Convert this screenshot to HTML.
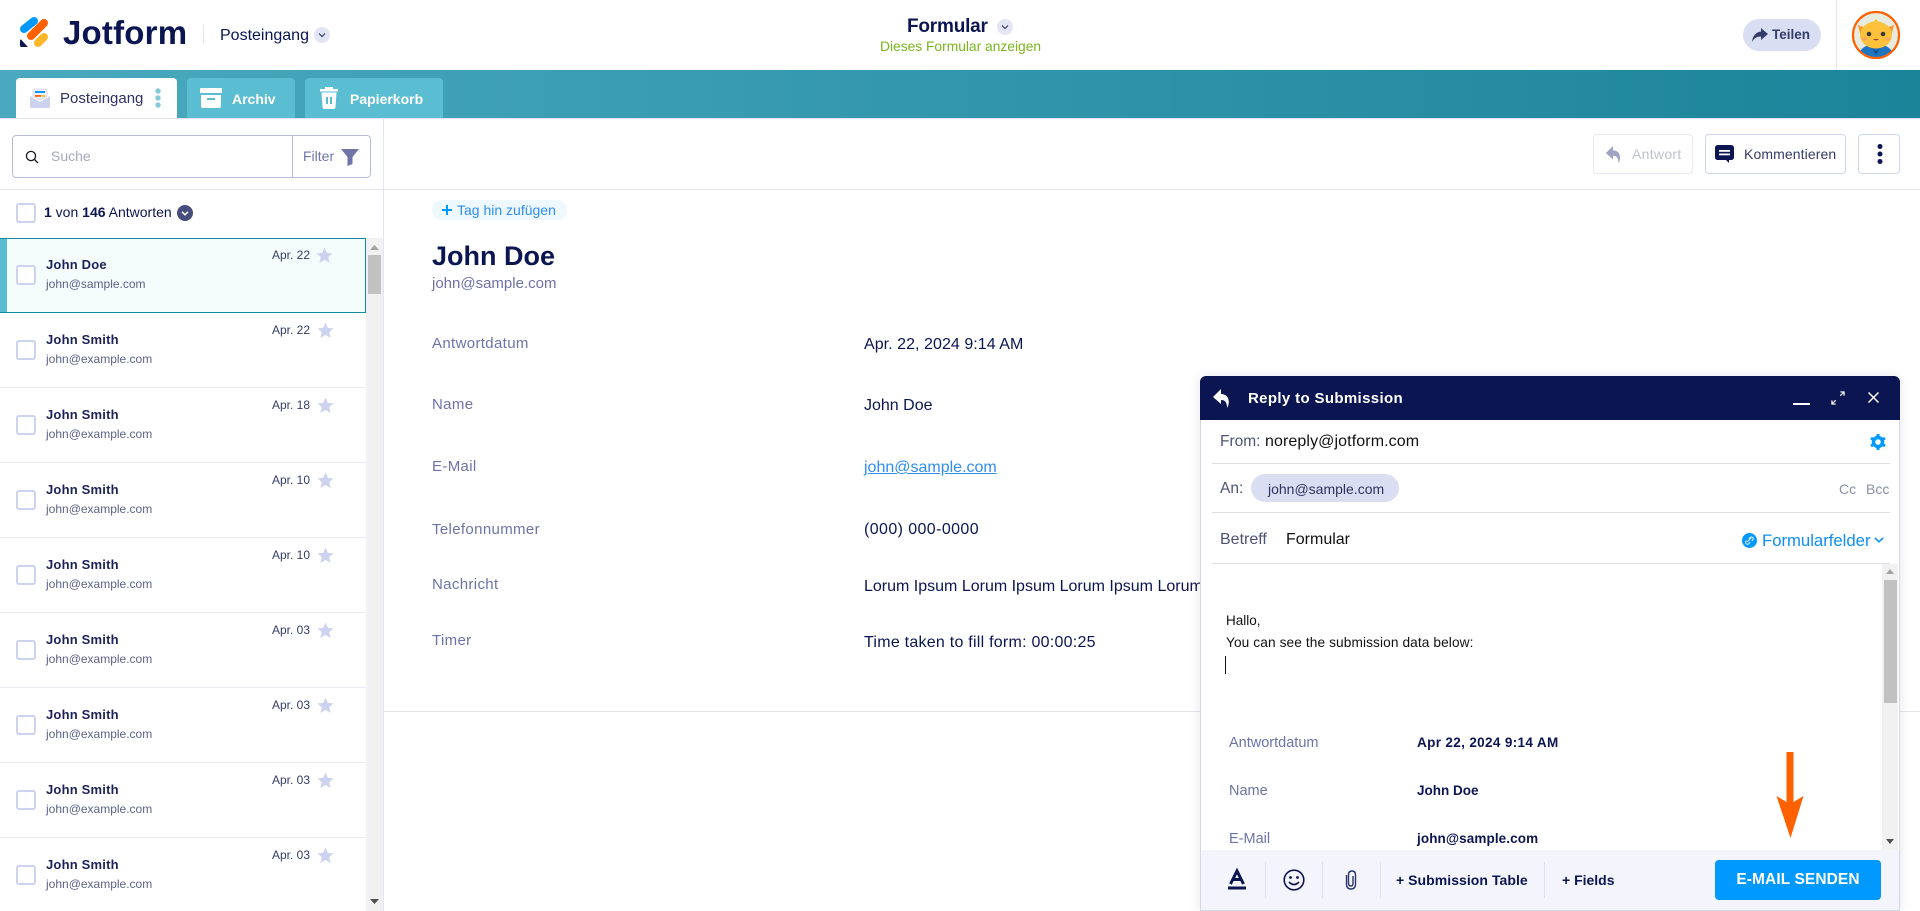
<!DOCTYPE html>
<html lang="de"><head><meta charset="utf-8"><title>Jotform Posteingang</title>
<style>
*{box-sizing:border-box}
html,body{margin:0;padding:0;width:1920px;height:911px;overflow:hidden;background:#fff;font-family:"Liberation Sans",sans-serif;color:#0a1551}
.a{position:absolute;white-space:nowrap}
svg{display:block;position:absolute;overflow:visible}
.tab{position:absolute;top:78px;height:40px;background:#5bbdd1;border-radius:4px 4px 0 0;color:#fff;font-size:14px;font-weight:bold;line-height:42px}
.row{position:absolute;left:0;width:366px;height:75px;border-bottom:1px solid #e8e9f3}
.cb{position:absolute;left:16px;top:27px;width:20px;height:20px;border:2px solid #cdd2ef;border-radius:3px;background:#fff}
.nm{position:absolute;left:46px;top:19px;font-size:13px;font-weight:bold;line-height:16px;color:#1c2259;letter-spacing:.2px;white-space:nowrap}
.em{position:absolute;left:46px;top:38px;font-size:12px;line-height:16px;color:#5d6288;white-space:nowrap}
.dt{position:absolute;right:56px;top:9px;font-size:12px;line-height:16px;color:#343c6a;white-space:nowrap}
.st{position:absolute;left:317px;top:9px}
.lb{position:absolute;left:432px;font-size:15px;line-height:20px;color:#6c73a8;white-space:nowrap;letter-spacing:.35px}
.vl{position:absolute;left:864px;font-size:16px;line-height:20px;color:#0a1551;white-space:nowrap}
.btn{position:absolute;top:134px;height:40px;background:#fff;border:1px solid #d0d5f0;border-radius:4px}
.mdiv{position:absolute;left:1212px;width:678px;height:1px;background:#dcdde3}
.fd{position:absolute;top:862px;width:1px;height:36px;background:#dfe1ee}
.ml{position:absolute;left:1229px;font-size:14.500px;line-height:16px;color:#6c73a8;white-space:nowrap}
.mv{position:absolute;left:1417px;font-size:13.500px;line-height:16px;font-weight:bold;color:#0a1551;white-space:nowrap}
</style></head><body>

<!-- Header -->
<div class="a" style="left:0;top:0;width:1920px;height:70px;background:#fff"></div>
<svg style="left:0;top:0" width="70" height="60" viewBox="0 0 70 60">
<line x1="24" y1="29" x2="34" y2="21" stroke="#0099ff" stroke-width="8" stroke-linecap="round"/>
<line x1="31" y1="36" x2="44" y2="23" stroke="#ff6100" stroke-width="8" stroke-linecap="round"/>
<line x1="38" y1="43" x2="44" y2="37" stroke="#ffb629" stroke-width="8" stroke-linecap="round"/>
<path d="M20 40.500Q20 39 21.200 39.800L27.500 46.500Q28 47 27 47L21.500 47Q20 47 20 45.500Z" fill="#0a1551"/>
</svg>
<div class="a" style="left:63px;top:14px;font-size:33px;line-height:38px;font-weight:bold;color:#0a1551;letter-spacing:.2px">Jotform</div>
<div class="a" style="left:203px;top:25px;width:1px;height:20px;background:#e3e5f2"></div>
<div class="a" style="left:220px;top:26px;font-size:16px;line-height:20px;color:#0a1551">Posteingang</div>
<div class="a" style="left:314px;top:27px;width:16px;height:16px;border-radius:50%;background:#e3e5f5"></div>
<svg style="left:314px;top:27px" width="16" height="16"><path d="M5 6.500L8 9.500L11 6.500" fill="none" stroke="#343c6a" stroke-width="1.200"/></svg>

<div class="a" style="left:907px;top:15px;font-size:19px;line-height:24px;font-weight:bold;color:#0a1551;letter-spacing:-.2px">Formular</div>
<div class="a" style="left:997px;top:19px;width:16px;height:16px;border-radius:50%;background:#e3e5f5"></div>
<svg style="left:997px;top:19px" width="16" height="16"><path d="M5 6.500L8 9.500L11 6.500" fill="none" stroke="#343c6a" stroke-width="1.200"/></svg>
<div class="a" style="left:880px;top:38px;font-size:13.800px;line-height:17px;color:#7ab51d">Dieses Formular anzeigen</div>

<div class="a" style="left:1743px;top:19px;width:78px;height:32px;border-radius:16px;background:#dadef3"></div>
<svg style="left:1751px;top:27px" width="18" height="16" viewBox="0 0 18 16"><path d="M10 1L17 7L10 13V9.500C6 9.500 3 11 1 15C1.500 9 5 5 10 4.500Z" fill="#343c6a"/></svg>
<div class="a" style="left:1772px;top:26px;font-size:13.500px;line-height:18px;font-weight:bold;color:#343c6a">Teilen</div>
<div class="a" style="left:1836px;top:0;width:1px;height:70px;background:#e3e5f2"></div>
<svg style="left:1852px;top:11px" width="48" height="48" viewBox="0 0 48 48">
<defs><clipPath id="c"><circle cx="24" cy="24" r="22"/></clipPath></defs>
<circle cx="24" cy="24" r="23" fill="#e8ebe0" stroke="#ff6100" stroke-width="2.200"/>
<g clip-path="url(#c)">
<path d="M6 48C6 38 14 33 24 33C34 33 42 38 42 48Z" fill="#1f75c0"/>
<path d="M6 14L14 17L9 26Z" fill="#f59b2c"/><path d="M42 14L34 17L39 26Z" fill="#f59b2c"/>
<ellipse cx="24" cy="24" rx="16" ry="13.500" fill="#fdc13c"/>
<path d="M21 11L24 8L27 11Z" fill="#fdc13c"/>
<circle cx="17" cy="23" r="2.300" fill="#3a3a3a"/><circle cx="31" cy="23" r="2.300" fill="#3a3a3a"/>
<ellipse cx="12.500" cy="28" rx="3" ry="1.500" fill="#fba95f"/><ellipse cx="35.500" cy="28" rx="3" ry="1.500" fill="#fba95f"/>
<path d="M21 28Q24 31 27 28" fill="#a3402b"/>
<path d="M20 37L24 40L28 37L24 44Z" fill="#0d4f8d"/>
</g></svg>

<!-- Teal bar -->
<div class="a" style="left:0;top:70px;width:1920px;height:48px;background:linear-gradient(90deg,#4aa9be,#1b8499)"></div>
<div class="a" style="left:0;top:118px;width:1920px;height:1px;background:#e3e5f2"></div>

<div class="tab" style="left:16px;width:161px;background:#fff;color:#2b3164;font-weight:normal;font-size:15px;padding-left:44px;z-index:2">Posteingang</div>
<svg style="left:30px;top:88px;z-index:3" width="20" height="20" viewBox="0 0 20 20">
<path d="M3 2.500Q3 1 4.500 1H15.500Q17 1 17 2.500V8L10 12L3 8Z" fill="#f0f1fa" stroke="#cfd3ee" stroke-width=".8"/>
<rect x="5" y="3" width="10" height="2" fill="#0099ff"/><rect x="5" y="7" width="6" height="1.800" fill="#ff6100"/><rect x="12" y="7" width="3" height="1.800" fill="#ffb629"/>
<path d="M0 8L10 14L20 8V18Q20 20 18 20H2Q0 20 0 18Z" fill="#cdd2ef"/>
</svg>
<svg style="left:153px;top:88px;z-index:3" width="10" height="20"><circle cx="5" cy="3" r="2.700" fill="#84cad9"/><circle cx="5" cy="10" r="2.700" fill="#84cad9"/><circle cx="5" cy="17" r="2.700" fill="#84cad9"/></svg>

<div class="tab" style="left:187px;width:108px;padding-left:45px">Archiv</div>
<svg style="left:200px;top:88px" width="22" height="20" viewBox="0 0 22 20"><rect x="0" y="0" width="22" height="5" rx=".8" fill="#fff"/><path d="M1 7H21V18Q21 20 19 20H3Q1 20 1 18Z" fill="#fff"/><rect x="7" y="10" width="8" height="2" fill="#5bbdd1"/></svg>
<div class="tab" style="left:305px;width:138px;padding-left:45px">Papierkorb</div>
<svg style="left:320px;top:87px" width="18" height="22" viewBox="0 0 18 22"><rect x="0" y="2" width="18" height="2.500" fill="#fff"/><rect x="5" y="0" width="8" height="2" fill="#fff"/><path d="M1.500 5.500H16.500L15.500 20Q15.400 22 13.500 22H4.500Q2.600 22 2.500 20Z" fill="#fff"/><rect x="6" y="10" width="2" height="7" fill="#5bbdd1"/><rect x="10" y="10" width="2" height="7" fill="#5bbdd1"/></svg>

<!-- Left panel -->
<div class="a" style="left:383px;top:119px;width:1px;height:792px;background:#e3e5f2"></div>
<div class="a" style="left:0;top:189px;width:1920px;height:1px;background:#e3e5ea"></div>
<div class="a" style="left:12px;top:135px;width:359px;height:43px;border:1px solid #b8bcd9;border-radius:4px;background:#fff"></div>
<div class="a" style="left:292px;top:135px;width:1px;height:43px;background:#b8bcd9"></div>
<svg style="left:25px;top:150px" width="14" height="14" viewBox="0 0 14 14"><circle cx="6" cy="6" r="4.600" fill="none" stroke="#1a1a2a" stroke-width="1.300"/><line x1="9.500" y1="9.500" x2="13" y2="13" stroke="#1a1a2a" stroke-width="1.300"/></svg>
<div class="a" style="left:51px;top:147px;font-size:14px;line-height:18px;color:#a5a8bd">Suche</div>
<div class="a" style="left:303px;top:147px;font-size:14px;line-height:18px;color:#6f76a7">Filter</div>
<svg style="left:341px;top:148px" width="18" height="18" viewBox="0 0 18 18"><path d="M0 1H18L11.500 9V16L6.500 18V9Z" fill="#6f76a7" stroke-linejoin="round"/></svg>

<div class="cb" style="top:203px;left:16px"></div>
<div class="a" style="left:44px;top:203px;font-size:14px;line-height:18px;color:#0a1551"><b>1</b> von <b>146</b> Antworten</div>
<div class="a" style="left:177px;top:205px;width:16px;height:16px;border-radius:50%;background:#474e7d"></div>
<svg style="left:177px;top:205px" width="16" height="16"><path d="M5 6.800L8 9.800L11 6.800" fill="none" stroke="#fff" stroke-width="1.500"/></svg>

<!-- Scrollbar -->
<div class="a" style="left:366px;top:238px;width:17px;height:673px;background:#f1f1f1"></div>
<div class="a" style="left:368px;top:255px;width:13px;height:39px;background:#c1c1c1"></div>
<svg style="left:370px;top:245px" width="9" height="5"><path d="M0 5L4.500 0L9 5Z" fill="#a3a3a3"/></svg>
<svg style="left:370px;top:899px" width="9" height="5"><path d="M0 0L4.500 5L9 0Z" fill="#505050"/></svg>

<!-- Rows -->
<div class="row" style="top:238px;background:#f5fcfc;border:1px solid #12899d;height:75px"><div style="position:absolute;left:-1px;top:0;width:7px;height:73px;background:#5bbdd1"></div><div class="cb" style="left:15px;top:26px"></div><div class="nm" style="left:45px;top:18px">John Doe</div><div class="em" style="left:45px;top:37px">john@sample.com</div><div class="dt" style="right:55px;top:8px">Apr. 22</div><svg class="st" style="left:315px;top:8px" width="17" height="17" viewBox="0 0 16 16"><path d="M8 .5L10.200 5.500L15.500 6L11.500 9.600L12.800 15L8 12.100L3.200 15L4.500 9.600L.5 6L5.800 5.500Z" fill="#cdd2ef"/></svg></div>

<div class="row" style="top:313px"><div class="cb"></div><div class="nm">John Smith</div><div class="em">john@example.com</div><div class="dt">Apr. 22</div><svg class="st" width="17" height="17" viewBox="0 0 16 16"><path d="M8 .5L10.200 5.500L15.500 6L11.500 9.600L12.800 15L8 12.100L3.200 15L4.500 9.600L.5 6L5.800 5.500Z" fill="#cdd2ef"/></svg></div>
<div class="row" style="top:388px"><div class="cb"></div><div class="nm">John Smith</div><div class="em">john@example.com</div><div class="dt">Apr. 18</div><svg class="st" width="17" height="17" viewBox="0 0 16 16"><path d="M8 .5L10.200 5.500L15.500 6L11.500 9.600L12.800 15L8 12.100L3.200 15L4.500 9.600L.5 6L5.800 5.500Z" fill="#cdd2ef"/></svg></div>
<div class="row" style="top:463px"><div class="cb"></div><div class="nm">John Smith</div><div class="em">john@example.com</div><div class="dt">Apr. 10</div><svg class="st" width="17" height="17" viewBox="0 0 16 16"><path d="M8 .5L10.200 5.500L15.500 6L11.500 9.600L12.800 15L8 12.100L3.200 15L4.500 9.600L.5 6L5.800 5.500Z" fill="#cdd2ef"/></svg></div>
<div class="row" style="top:538px"><div class="cb"></div><div class="nm">John Smith</div><div class="em">john@example.com</div><div class="dt">Apr. 10</div><svg class="st" width="17" height="17" viewBox="0 0 16 16"><path d="M8 .5L10.200 5.500L15.500 6L11.500 9.600L12.800 15L8 12.100L3.200 15L4.500 9.600L.5 6L5.800 5.500Z" fill="#cdd2ef"/></svg></div>
<div class="row" style="top:613px"><div class="cb"></div><div class="nm">John Smith</div><div class="em">john@example.com</div><div class="dt">Apr. 03</div><svg class="st" width="17" height="17" viewBox="0 0 16 16"><path d="M8 .5L10.200 5.500L15.500 6L11.500 9.600L12.800 15L8 12.100L3.200 15L4.500 9.600L.5 6L5.800 5.500Z" fill="#cdd2ef"/></svg></div>
<div class="row" style="top:688px"><div class="cb"></div><div class="nm">John Smith</div><div class="em">john@example.com</div><div class="dt">Apr. 03</div><svg class="st" width="17" height="17" viewBox="0 0 16 16"><path d="M8 .5L10.200 5.500L15.500 6L11.500 9.600L12.800 15L8 12.100L3.200 15L4.500 9.600L.5 6L5.800 5.500Z" fill="#cdd2ef"/></svg></div>
<div class="row" style="top:763px"><div class="cb"></div><div class="nm">John Smith</div><div class="em">john@example.com</div><div class="dt">Apr. 03</div><svg class="st" width="17" height="17" viewBox="0 0 16 16"><path d="M8 .5L10.200 5.500L15.500 6L11.500 9.600L12.800 15L8 12.100L3.200 15L4.500 9.600L.5 6L5.800 5.500Z" fill="#cdd2ef"/></svg></div>
<div class="row" style="top:838px;border-bottom:0;height:73px"><div class="cb"></div><div class="nm">John Smith</div><div class="em">john@example.com</div><div class="dt">Apr. 03</div><svg class="st" width="17" height="17" viewBox="0 0 16 16"><path d="M8 .5L10.200 5.500L15.500 6L11.500 9.600L12.800 15L8 12.100L3.200 15L4.500 9.600L.5 6L5.800 5.500Z" fill="#cdd2ef"/></svg></div>

<!-- Action buttons -->
<div class="btn" style="left:1593px;width:100px;border-color:#e6e8f5"></div>
<svg style="left:1605px;top:145px" width="17" height="18" viewBox="0 0 17 20"><path d="M8 1L0 9L8 16V12C12 12 14 14 14 20C17 16 17 6 8 6Z" fill="#a0a4c2"/></svg>
<div class="a" style="left:1632px;top:145px;font-size:14px;line-height:18px;color:#bfc1d0;letter-spacing:.3px">Antwort</div>
<div class="btn" style="left:1705px;width:141px"></div>
<svg style="left:1715px;top:145px" width="19" height="18" viewBox="0 0 19 18"><path d="M3 0H16Q19 0 19 3V12Q19 15 16 15H14V18L11 15H3Q0 15 0 12V3Q0 0 3 0Z" fill="#0a1551"/><rect x="4" y="5" width="11" height="1.800" fill="#fff"/><rect x="4" y="8.500" width="11" height="1.800" fill="#fff"/></svg>
<div class="a" style="left:1744px;top:145px;font-size:14px;line-height:18px;color:#343c6a;letter-spacing:.1px">Kommentieren</div>
<div class="btn" style="left:1858px;width:42px"></div>
<svg style="left:1875px;top:144px" width="10" height="20"><circle cx="5" cy="2.500" r="2.500" fill="#0a1551"/><circle cx="5" cy="10" r="2.500" fill="#0a1551"/><circle cx="5" cy="17.500" r="2.500" fill="#0a1551"/></svg>

<!-- Main content -->
<div class="a" style="left:432px;top:200px;width:135px;height:20px;border-radius:10px;background:#edf8ff"></div>
<svg style="left:442px;top:205px" width="10" height="10"><path d="M5 0V10M0 5H10" stroke="#0099ff" stroke-width="2"/></svg>
<div class="a" style="left:457px;top:202px;font-size:14px;line-height:16px;color:#2f8ef0">Tag hin zufügen</div>
<div class="a" style="left:432px;top:240px;font-size:27px;line-height:32px;font-weight:bold;color:#0a1551">John Doe</div>
<div class="a" style="left:432px;top:275px;font-size:15px;line-height:18px;color:#6c73a8">john@sample.com</div>

<div class="lb" style="top:334px">Antwortdatum</div><div class="vl" style="top:335px;letter-spacing:.05px">Apr. 22, 2024 9:14 AM</div>
<div class="lb" style="top:395px">Name</div><div class="vl" style="top:396px">John Doe</div>
<div class="lb" style="top:457px">E-Mail</div><div class="vl" style="top:458px;color:#2f8ef0;text-decoration:underline">john@sample.com</div>
<div class="lb" style="top:520px">Telefonnummer</div><div class="vl" style="top:520px;letter-spacing:.4px">(000) 000-0000</div>
<div class="lb" style="top:575px">Nachricht</div><div class="vl" style="top:577px">Lorum Ipsum Lorum Ipsum Lorum Ipsum Lorum Ipsum</div>
<div class="lb" style="top:631px">Timer</div><div class="vl" style="top:633px;letter-spacing:.25px">Time taken to fill form: 00:00:25</div>
<div class="a" style="left:384px;top:711px;width:1536px;height:1px;background:#e3e5ea"></div>

<!-- Modal -->
<div class="a" style="left:1200px;top:376px;width:700px;height:535px;background:#fff;border:1px solid #d4d7e8;border-radius:6px 6px 0 0;box-shadow:0 0 12px rgba(10,21,81,.1)"></div>
<div class="a" style="left:1200px;top:376px;width:700px;height:44px;background:#0a1551;border-radius:6px 6px 0 0"></div>
<svg style="left:1213px;top:388px" width="17" height="20" viewBox="0 0 17 20"><path d="M8 1L0 9L8 16V12C12 12 14 14 14 20C17 16 17 6 8 6Z" fill="#fff"/></svg>
<div class="a" style="left:1248px;top:390px;font-size:15px;line-height:18px;font-weight:bold;color:#fff;letter-spacing:.35px">Reply to Submission</div>
<div class="a" style="left:1793px;top:403px;width:17px;height:2px;background:#fff"></div>
<svg style="left:1831px;top:391px" width="14" height="14" viewBox="0 0 15 15"><path d="M10 1H14V5M14 1L10 5M1 10V14H5M1 14L5 10" fill="none" stroke="#fff" stroke-width="1.300"/></svg>
<svg style="left:1868px;top:392px" width="11" height="11"><path d="M.5.5L10.500 10.500M10.500.5L.5 10.500" stroke="#fff" stroke-width="1.500"/></svg>

<div class="a" style="left:1220px;top:433px;font-size:15.500px;line-height:18px;color:#4d5377">From:</div>
<div class="a" style="left:1265px;top:433px;font-size:16px;line-height:18px;color:#111;letter-spacing:.1px">noreply@jotform.com</div>
<svg style="left:1870px;top:434px" width="16" height="16" viewBox="0 0 16 16"><circle cx="8" cy="8" r="4.500" fill="none" stroke="#0099ff" stroke-width="3.500"/><path d="M8 0V3M8 13V16M1 4L3.500 5.500M12.500 10.500L15 12M1 12L3.500 10.500M12.500 5.500L15 4" stroke="#0099ff" stroke-width="3"/></svg>
<div class="mdiv" style="top:463px"></div>
<div class="a" style="left:1220px;top:480px;font-size:15.500px;line-height:18px;color:#4d5377">An:</div>
<div class="a" style="left:1251px;top:474px;width:148px;height:28px;border-radius:14px;background:#dadef3"></div>
<div class="a" style="left:1268px;top:480px;font-size:14px;line-height:18px;color:#2f3560">john@sample.com</div>
<div class="a" style="left:1839px;top:480px;font-size:14px;line-height:18px;color:#8a8ea9">Cc</div>
<div class="a" style="left:1866px;top:480px;font-size:14px;line-height:18px;color:#8a8ea9">Bcc</div>
<div class="mdiv" style="top:512px"></div>
<div class="a" style="left:1220px;top:531px;font-size:16px;line-height:18px;color:#4d5377">Betreff</div>
<div class="a" style="left:1286px;top:531px;font-size:16px;line-height:18px;color:#111">Formular</div>
<div class="a" style="left:1742px;top:533px;width:15px;height:15px;border-radius:50%;background:#0099ff"></div>
<svg style="left:1742px;top:533px" width="15" height="15"><path d="M5 9L9 5M4.500 7.500L3.800 8.500Q3 10 4.500 11Q6 11.800 7 10.500L8 9M7 5.500L8 4.500Q9.500 3.500 10.800 4.500Q11.800 6 10.500 7L9.800 7.800" fill="none" stroke="#fff" stroke-width=".9"/></svg>
<div class="a" style="left:1762px;top:532px;font-size:16.700px;line-height:18px;color:#0c8ff0">Formularfelder</div>
<svg style="left:1874px;top:537px" width="10" height="6"><path d="M.8.8L5 4.800L9.200.8" fill="none" stroke="#0c8ff0" stroke-width="1.500"/></svg>
<div class="mdiv" style="top:563px"></div>

<div class="a" style="left:1882px;top:564px;width:16px;height:286px;background:#f1f1f1"></div>
<div class="a" style="left:1884px;top:580px;width:13px;height:123px;background:#c1c1c1"></div>
<svg style="left:1886px;top:569px" width="8" height="5"><path d="M0 5L4 0L8 5Z" fill="#a3a3a3"/></svg>
<svg style="left:1886px;top:839px" width="8" height="5"><path d="M0 0L4 5L8 0Z" fill="#505050"/></svg>

<div class="a" style="left:1226px;top:613px;font-size:13.500px;line-height:16px;color:#111">Hallo,</div>
<div class="a" style="left:1226px;top:635px;font-size:13.700px;line-height:16px;color:#111;letter-spacing:.1px">You can see the submission data below:</div>
<div class="a" style="left:1225px;top:656px;width:1px;height:18px;background:#111"></div>

<div class="ml" style="top:735px">Antwortdatum</div><div class="mv" style="top:735px;letter-spacing:.35px">Apr 22, 2024 9:14 AM</div>
<div class="ml" style="top:783px">Name</div><div class="mv" style="top:783px">John Doe</div>
<div class="ml" style="top:831px">E-Mail</div><div class="mv" style="top:831px;letter-spacing:.1px">john@sample.com</div>

<!-- Footer -->
<div class="a" style="left:1201px;top:850px;width:698px;height:60px;background:#f3f4fc"></div>
<svg style="left:1228px;top:869px" width="18" height="21" viewBox="0 0 18 21"><path d="M2.500 15L9 2L15.500 15M5 10.500H13" fill="none" stroke="#0a1551" stroke-width="3"/><rect x="0" y="17.500" width="18" height="3" fill="#0a1551"/></svg>
<div class="fd" style="left:1265px"></div>
<svg style="left:1283px;top:869px" width="22" height="22" viewBox="0 0 22 22"><circle cx="11" cy="11" r="9.800" fill="none" stroke="#0a1551" stroke-width="1.600"/><circle cx="7.500" cy="8.500" r="1.400" fill="#0a1551"/><circle cx="14.500" cy="8.500" r="1.400" fill="#0a1551"/><path d="M6 13Q11 18 16 13" fill="none" stroke="#0a1551" stroke-width="1.600"/></svg>
<div class="fd" style="left:1322px"></div>
<svg style="left:1345px;top:870px" width="12" height="20" viewBox="0 0 12 20"><path d="M1.500 5V14Q1.500 19 6 19Q10.500 19 10.500 14V5Q10.500 1 7 1Q3.500 1 3.500 5V13Q3.500 16 6 16Q8 16 8 13V6" fill="none" stroke="#2b3469" stroke-width="1.400"/></svg>
<div class="fd" style="left:1380px"></div>
<div class="a" style="left:1396px;top:871px;font-size:14px;line-height:18px;font-weight:bold;color:#0a1551;letter-spacing:.05px">+ Submission Table</div>
<div class="fd" style="left:1544px"></div>
<div class="a" style="left:1562px;top:871px;font-size:14px;line-height:18px;font-weight:bold;color:#0a1551">+ Fields</div>
<div class="a" style="left:1715px;top:860px;width:166px;height:40px;border-radius:4px;background:#0099ff;color:#fff;font-size:15.500px;line-height:40px;font-weight:bold;text-align:center;letter-spacing:.1px">E-MAIL SENDEN</div>

<!-- Orange arrow -->
<svg style="left:1776px;top:752px" width="28" height="88" viewBox="0 0 28 88"><path d="M10.500 0H17.500V50L27.500 44L14.500 86L0.500 44L10.500 50Z" fill="#ff6100"/></svg>

</body></html>
